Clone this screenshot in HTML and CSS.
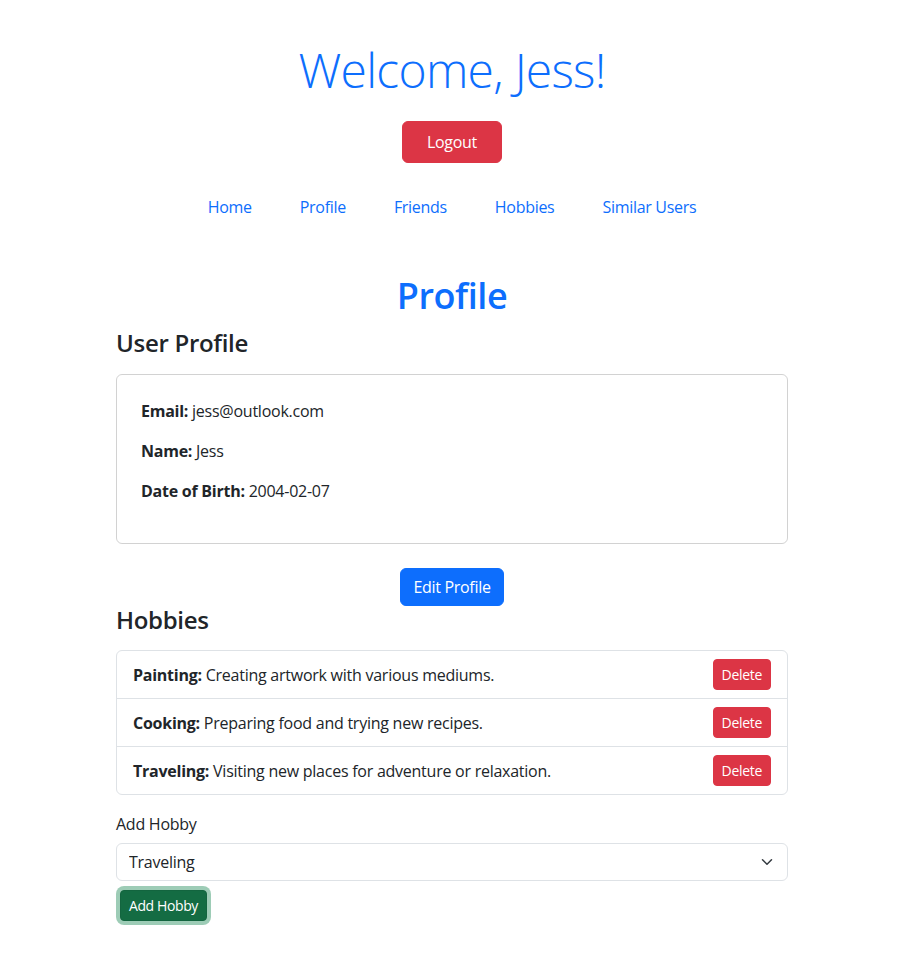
FILE: index.html
```html
<!DOCTYPE html>
<html lang="en">
<head>
<meta charset="utf-8">
<title>Profile</title>
<link rel="stylesheet" href="styles.css">
</head>
<body>
<div class="page">
  <header class="top">
    <h1 class="welcome">Welcome, Jess!</h1>
    <div class="center-row"><button class="btn btn-danger btn-logout">Logout</button></div>
    <nav class="nav">
      <a class="nav-link" href="#">Home</a>
      <a class="nav-link" href="#">Profile</a>
      <a class="nav-link" href="#">Friends</a>
      <a class="nav-link" href="#">Hobbies</a>
      <a class="nav-link" href="#">Similar Users</a>
    </nav>
  </header>
  <main class="container">
    <h1 class="page-title">Profile</h1>
    <h3 class="section-title first">User Profile</h3>
    <div class="card">
      <p><strong>Email:</strong> jess@outlook.com</p>
      <p><strong>Name:</strong> Jess</p>
      <p><strong>Date of Birth:</strong> 2004-02-07</p>
    </div>
    <div class="center-row edit-row"><button class="btn btn-primary">Edit Profile</button></div>
    <h3 class="section-title">Hobbies</h3>
    <ul class="list-group">
      <li class="list-item"><span><strong>Painting:</strong> Creating artwork with various mediums.</span><button class="btn btn-sm btn-danger">Delete</button></li>
      <li class="list-item"><span><strong>Cooking:</strong> Preparing food and trying new recipes.</span><button class="btn btn-sm btn-danger">Delete</button></li>
      <li class="list-item"><span><strong>Traveling:</strong> Visiting new places for adventure or relaxation.</span><button class="btn btn-sm btn-danger">Delete</button></li>
    </ul>
    <label class="form-label" for="hobby">Add Hobby</label>
    <div class="select-wrap">
      <select id="hobby" class="form-select">
        <option>Traveling</option>
      </select>
      <svg class="chevron" width="16" height="12" viewBox="0 0 16 16" aria-hidden="true"><path d="m2 5 6 6 6-6" fill="none" stroke="#343a40" stroke-linecap="round" stroke-linejoin="round" stroke-width="2"/></svg>
    </div>
    <div class="add-row"><button class="btn btn-sm btn-success btn-focus">Add Hobby</button></div>
  </main>
</div>
</body>
</html>
```
FILE: styles.css
```css
* { box-sizing: border-box; }
html, body { margin: 0; padding: 0; background: #fff; }
body {
  font-family: "Open Sans", "Noto Sans", sans-serif;
  font-size: 16px;
  line-height: 24px;
  color: #212529;
}
.page { width: 904px; padding-top: 41px; }
.top { display: flex; flex-direction: column; align-items: center; }
.welcome {
  margin: 0;
  font-size: 48px;
  line-height: 58px;
  font-weight: 300;
  color: #0d6efd;
  letter-spacing: -0.7px;
}
.center-row { display: flex; justify-content: center; }
.btn {
  font-family: inherit;
  font-size: 16px;
  line-height: 24px;
  padding: 6px 12px;
  border: 1px solid transparent;
  border-radius: 6px;
  color: #fff;
  cursor: pointer;
  letter-spacing: -0.3px;
}
.btn-logout { margin-top: 22px; padding: 8px 24px; }
.btn-danger { background: #dc3545; border-color: #dc3545; }
.btn-primary { background: #0d6efd; border-color: #0d6efd; }
.btn-success { background: #146c43; border-color: #13653f; }
.btn-sm { font-size: 14px; line-height: 21px; padding: 4px 8px; border-radius: 4px; }
.btn-focus { box-shadow: 0 0 0 4px rgba(60, 153, 110, 0.5); }
.nav { display: flex; justify-content: center; margin-top: 24px; }
.nav-link {
  padding: 8px 24px;
  color: #0d6efd;
  text-decoration: none;
  letter-spacing: -0.3px;
}
.container { width: 672px; margin: 0 auto; padding-bottom: 30px; }
.page-title {
  margin: 47px 0 0;
  text-align: center;
  font-size: 36px;
  line-height: 43px;
  font-weight: 600;
  color: #0d6efd;
  letter-spacing: -0.4px;
}
.section-title {
  margin: 0 0 16px;
  font-size: 24px;
  line-height: 28px;
  font-weight: 600;
  letter-spacing: -0.3px;
}
.section-title.first { margin-top: 12px; margin-bottom: 17px; }
.card {
  border: 1px solid rgba(0, 0, 0, 0.175);
  border-radius: 6px;
  padding: 24px;
}
.card p { margin: 0 0 16px; letter-spacing: -0.25px; }
.edit-row { margin-top: 24px; }
.list-group {
  list-style: none;
  margin: 0;
  padding: 0;
  border: 1px solid #dee2e6;
  border-radius: 6px;
}
.list-item {
  display: flex;
  align-items: center;
  justify-content: space-between;
  padding: 8px 16px;
  letter-spacing: -0.25px;
}
.list-item + .list-item { border-top: 1px solid #dee2e6; }
.form-label { display: block; margin: 17px 0 7px; letter-spacing: -0.25px; }
.select-wrap { position: relative; }
.form-select {
  display: block;
  width: 100%;
  height: 38px;
  font-family: inherit;
  font-size: 16px;
  line-height: 24px;
  color: #212529;
  padding: 6px 36px 6px 12px;
  border: 1px solid #dee2e6;
  border-radius: 6px;
  background: #fff;
  appearance: none;
  -webkit-appearance: none;
  letter-spacing: -0.25px;
}
.chevron { position: absolute; right: 13px; top: 13px; pointer-events: none; }
.add-row { margin-top: 9px; padding-left: 4px; }
.add-row .btn { letter-spacing: -0.4px; }
```
